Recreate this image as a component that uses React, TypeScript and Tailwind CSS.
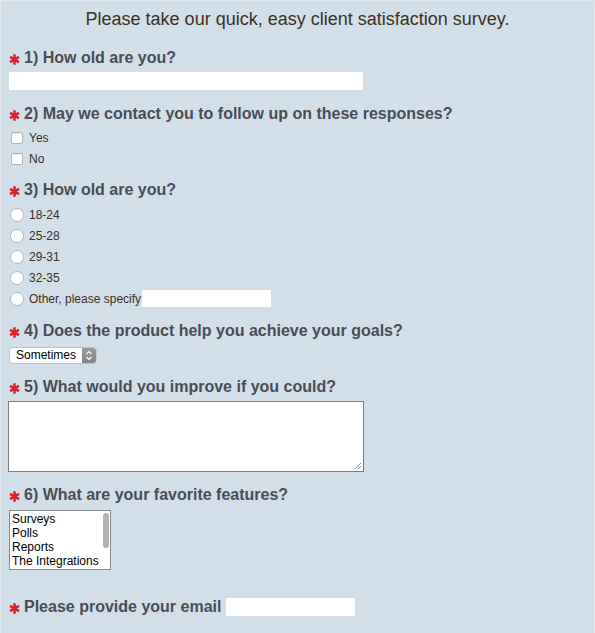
import React from "react";

const Star = () => (
  <svg width="11" height="11" viewBox="0 0 11 11" className="shrink-0 mt-[2px]">
    <g stroke="#d8232f" strokeWidth="2.6" strokeLinecap="butt">
      <line x1="5.5" y1="0.3" x2="5.5" y2="10.7" />
      <line x1="1" y1="2.9" x2="10" y2="8.1" />
      <line x1="1" y1="8.1" x2="10" y2="2.9" />
    </g>
  </svg>
);

const Heading = ({ children, className = "" }: { children: React.ReactNode; className?: string }) => (
  <div className={`flex items-center gap-[4px] pl-[8px] h-[20px] text-[16px] leading-[20px] font-bold text-[#4a4c56] ${className}`}>
    <Star />
    <span>{children}</span>
  </div>
);

const Check = ({ label }: { label: string }) => (
  <div className="flex items-center h-[21px] pl-[10px]">
    <span className="w-[12px] h-[12px] rounded-[2px] bg-white border border-[#b5b5b5] shadow-[inset_0_1px_0_#eee]" />
    <span className="ml-[6px] text-[12px] text-[#3b2e22]">{label}</span>
  </div>
);

const Radio = ({ label, children }: { label: string; children?: React.ReactNode }) => (
  <div className="flex items-center h-[21px] pl-[9px]">
    <span className="w-[14px] h-[14px] rounded-full bg-white border border-[#b8b8b8]" />
    <span className="ml-[5px] text-[12px] text-[#3b2e22]">{label}</span>
    {children}
  </div>
);

export default function App() {
  return (
    <div
      className="w-[595px] h-[633px] bg-[#d2dfe8] border-t border-x border-[#e2e9ee] overflow-hidden"
      style={{ fontFamily: '"Liberation Sans", Arial, sans-serif' }}
    >
      <div className="pt-[8px] text-center text-[18px] leading-[20px] text-[#3c2f23]">
        Please take our quick, easy client satisfaction survey.
      </div>

      <Heading className="mt-[19px]">1) How old are you?</Heading>
      <div className="pl-[8px] mt-[4px]">
        <input className="block w-[354px] h-[18px] bg-white outline-none" />
      </div>

      <Heading className="mt-[14px]">2) May we contact you to follow up on these responses?</Heading>
      <div className="mt-[3px]">
        <Check label="Yes" />
        <Check label="No" />
      </div>

      <Heading className="mt-[11px]">3) How old are you?</Heading>
      <div className="mt-[4px]">
        <Radio label="18-24" />
        <Radio label="25-28" />
        <Radio label="29-31" />
        <Radio label="32-35" />
        <Radio label="Other, please specify">
          <input className="ml-[1px] w-[129px] h-[17px] bg-white outline-none" />
        </Radio>
      </div>

      <Heading className="mt-[12px]">4) Does the product help you achieve your goals?</Heading>
      <div className="pl-[8px] mt-[6px]">
        <div className="w-[88px] h-[17px] rounded-[4px] bg-white border border-[#c4c4c4] flex items-stretch overflow-hidden">
          <span className="flex-1 pl-[6px] text-[12px] leading-[15px] text-black">Sometimes</span>
          <span className="w-[14px] bg-gradient-to-b from-[#9a9a9a] to-[#858585] flex items-center justify-center">
            <svg width="8" height="11" viewBox="0 0 8 11">
              <path d="M1.5 4 L4 1.5 L6.5 4 M1.5 7 L4 9.5 L6.5 7" fill="none" stroke="white" strokeWidth="1.1" />
            </svg>
          </span>
        </div>
      </div>

      <Heading className="mt-[13px]">5) What would you improve if you could?</Heading>
      <div className="pl-[7px] mt-[4px]">
        <div className="relative w-[356px] h-[71px] bg-white border border-[#7d7d7d]">
          <svg width="8" height="8" viewBox="0 0 8 8" className="absolute right-[1px] bottom-[1px]">
            <path d="M7 1 L1 7 M7 4 L4 7" stroke="#888" strokeWidth="0.9" />
          </svg>
        </div>
      </div>

      <Heading className="mt-[13px]">6) What are your favorite features?</Heading>
      <div className="pl-[8px] mt-[5px]">
        <div className="relative w-[102px] h-[60px] bg-white border border-[#8a8a8a] text-[12px] leading-[14px] text-black">
          <div className="pl-[2px] pt-[1px]">
            <div>Surveys</div>
            <div>Polls</div>
            <div>Reports</div>
            <div className="whitespace-nowrap">The Integrations</div>
          </div>
          <div className="absolute top-[2px] right-[1px] w-[6px] h-[35px] rounded-[3px] bg-[#b3b3b3]" />
        </div>
      </div>

      <div className="flex items-center mt-[27px]">
        <Heading>Please provide your email</Heading>
        <input className="ml-[5px] w-[129px] h-[18px] bg-white outline-none" />
      </div>
    </div>
  );
}
